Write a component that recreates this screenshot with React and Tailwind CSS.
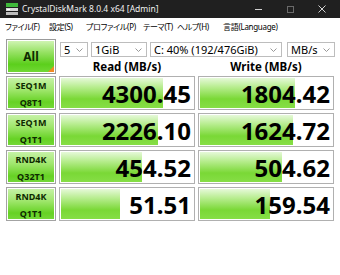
import React from "react";

const rows = [
  { l1: "SEQ1M", l2: "Q8T1", r: "4300.45", rw: 102, w: "1804.42", ww: 95 },
  { l1: "SEQ1M", l2: "Q1T1", r: "2226.10", rw: 97, w: "1624.72", ww: 93 },
  { l1: "RND4K", l2: "Q32T1", r: "454.52", rw: 81, w: "504.62", ww: 82 },
  { l1: "RND4K", l2: "Q1T1", r: "51.51", rw: 59, w: "159.54", ww: 70 },
];

function Chevron() {
  return (
    <svg width="7" height="4" viewBox="0 0 7 4" className="shrink-0">
      <path d="M0.5 0.5 L3.5 3.5 L6.5 0.5" fill="none" stroke="#8c8c8c" strokeWidth="0.9" />
    </svg>
  );
}

function Select({ className, text }) {
  return (
    <div className={`${className} h-[15px] border border-[#bdbdbd] bg-white flex items-center justify-between pl-[3px] pr-[4px] text-[11px] leading-none text-black whitespace-nowrap`}>
      <span>{text}</span>
      <Chevron />
    </div>
  );
}

function Meter({ value, fill }) {
  return (
    <div className="h-[34px] border border-[#b0b0b0] bg-white p-px">
      <div className="relative h-full">
        <div
          className="absolute inset-y-0 left-0 bg-[linear-gradient(to_bottom,#e6f9d9_0%,#b8ed90_30%,#7ad836_70%,#86de46_100%)]"
          style={{ width: fill }}
        />
        <div className="relative h-full flex items-center justify-end pr-[2px] pt-[2px] text-[24px] font-bold leading-none text-black">
          {value}
        </div>
      </div>
    </div>
  );
}

function Label({ l1, l2 }) {
  return (
    <div className="h-[34px] border border-[#a3a3a3] p-px bg-white">
      <div className="h-full flex flex-col items-center justify-center pt-px text-[9px] font-bold leading-[17px] text-[#0e2a00] bg-[linear-gradient(to_bottom,#c6f2a6_0%,#9fe66c_40%,#66d224_80%,#74d838_100%)]">
        <span>{l1}</span>
        <span>{l2}</span>
      </div>
    </div>
  );
}

export default function App() {
  return (
    <div className="w-[340px] h-[275px] bg-white overflow-hidden font-['Noto_Sans','Noto_Sans_CJK_JP',sans-serif]">
      {/* Title bar */}
      <div className="h-[18px] bg-[#202020] flex items-center text-white">
        <svg width="12" height="12" viewBox="0 0 12 12" className="ml-[6px] shrink-0">
          <rect x="0" y="0" width="12" height="4" fill="#3fb83a" />
          <rect x="0" y="5" width="12" height="3" fill="#d8d8d8" />
          <rect x="0" y="9" width="12" height="3" fill="#bdbdbd" />
          <rect x="1" y="6" width="3" height="1" fill="#ffffff" />
        </svg>
        <span className="ml-[4px] text-[8.5px] leading-none text-[#f0f0f0] whitespace-nowrap">CrystalDiskMark 8.0.4 x64 [Admin]</span>
        <div className="ml-auto flex items-center h-full">
          <div className="w-[32px] flex justify-center">
            <div className="w-[7px] h-px bg-[#d0d0d0]" />
          </div>
          <div className="w-[32px] flex justify-center">
            <div className="w-[7px] h-[7px] border border-[#6a6a6a]" />
          </div>
          <div className="w-[32px] flex justify-center mr-[2px]">
            <svg width="8" height="8" viewBox="0 0 8 8">
              <path d="M0.5 0.5 L7.5 7.5 M7.5 0.5 L0.5 7.5" stroke="#e8e8e8" strokeWidth="0.9" />
            </svg>
          </div>
        </div>
      </div>
      {/* Menu bar */}
      <div className="h-[18px] flex items-center pl-[5px] text-[8px] leading-none text-black whitespace-nowrap tracking-[-0.3px] [font-feature-settings:'palt']">
        <span className="w-[44px] shrink-0">ファイル(F)</span>
        <span className="w-[37px] shrink-0">設定(S)</span>
        <span className="w-[57px] shrink-0">プロファイル(P)</span>
        <span className="w-[34px] shrink-0">テーマ(T)</span>
        <span className="w-[46px] shrink-0">ヘルプ(H)</span>
        <span>言語(Language)</span>
      </div>
      {/* Content */}
      <div className="pl-[6px] pt-[3px]">
        <div className="flex gap-[3px]">
          <div className="w-[50px] h-[35px] border border-[#9a9a9a] p-px bg-white">
            <div className="relative h-full flex items-center justify-center text-[12px] font-bold text-[#0e2a00] bg-[linear-gradient(to_bottom,#cff4b2_0%,#98e266_35%,#5ccf1c_75%,#70d834_100%)]">
              All
              <div className="absolute right-0 bottom-0 w-0 h-0 border-l-[6px] border-l-transparent border-b-[6px] border-b-[#f08a24]" />
            </div>
          </div>
          <div className="flex flex-col">
            <div className="flex mt-[3px] ml-px">
              <Select className="w-[28px]" text="5" />
              <Select className="w-[56px] ml-[3px]" text="1GiB" />
              <Select className="w-[132px] ml-[3px]" text="C: 40% (192/476GiB)" />
              <Select className="w-[48px] ml-[5px]" text="MB/s" />
            </div>
            <div className="flex gap-[3px] flex-1 items-center pt-[3px]">
              <div className="w-[136px] text-center text-[11.5px] font-bold leading-none text-black">Read (MB/s)</div>
              <div className="w-[136px] text-center text-[11.5px] font-bold leading-none text-black">Write (MB/s)</div>
            </div>
          </div>
        </div>
        <div className="mt-[2px] grid grid-cols-[50px_136px_136px] gap-x-[3px] gap-y-[3px]">
          {rows.map((r, i) => (
            <React.Fragment key={i}>
              <Label l1={r.l1} l2={r.l2} />
              <Meter value={r.r} fill={r.rw} />
              <Meter value={r.w} fill={r.ww} />
            </React.Fragment>
          ))}
        </div>
      </div>
    </div>
  );
}
